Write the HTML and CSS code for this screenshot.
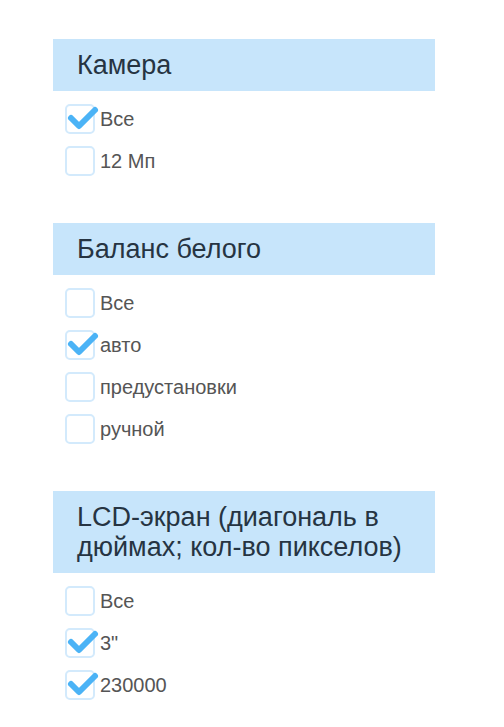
FILE: index.html
```html
<!DOCTYPE html>
<html lang="ru">
<head>
<meta charset="utf-8">
<link rel="stylesheet" href="styles.css">
</head>
<body>
<div class="filters">
  <section class="group">
    <h2 class="group-title">Камера</h2>
    <ul class="options">
      <li class="option"><span class="box checked"><svg viewBox="0 0 30 30"><path d="M5 14 L13 22 L29 6"/></svg></span><span class="label">Все</span></li>
      <li class="option"><span class="box"></span><span class="label">12 Мп</span></li>
    </ul>
  </section>
  <section class="group">
    <h2 class="group-title">Баланс белого</h2>
    <ul class="options">
      <li class="option"><span class="box"></span><span class="label">Все</span></li>
      <li class="option"><span class="box checked"><svg viewBox="0 0 30 30"><path d="M5 14 L13 22 L29 6"/></svg></span><span class="label">авто</span></li>
      <li class="option"><span class="box"></span><span class="label">предустановки</span></li>
      <li class="option"><span class="box"></span><span class="label">ручной</span></li>
    </ul>
  </section>
  <section class="group">
    <h2 class="group-title">LCD-экран (диагональ в дюймах; кол-во пикселов)</h2>
    <ul class="options">
      <li class="option"><span class="box"></span><span class="label">Все</span></li>
      <li class="option"><span class="box checked"><svg viewBox="0 0 30 30"><path d="M5 14 L13 22 L29 6"/></svg></span><span class="label">3"</span></li>
      <li class="option"><span class="box checked"><svg viewBox="0 0 30 30"><path d="M5 14 L13 22 L29 6"/></svg></span><span class="label">230000</span></li>
    </ul>
  </section>
</div>
</body>
</html>
```
FILE: styles.css
```css
html, body {
  margin: 0;
  padding: 0;
  background: #fff;
}
body {
  font-family: "Liberation Sans", Arial, sans-serif;
}
.filters {
  width: 382px;
  margin-left: 53px;
  padding-top: 39px;
  display: flex;
  flex-direction: column;
  gap: 47px;
}
.group-title {
  margin: 0;
  background: #c7e5fb;
  color: #263442;
  font-size: 27px;
  font-weight: normal;
  line-height: 30px;
  padding: 11px 10px 11px 24px;
}
.options {
  list-style: none;
  margin: 0;
  padding: 13px 0 0 12px;
  display: flex;
  flex-direction: column;
  gap: 12px;
}
.option {
  display: flex;
  align-items: center;
  height: 30px;
}
.box {
  position: relative;
  box-sizing: border-box;
  width: 30px;
  height: 30px;
  border: 2px solid #d3eafc;
  border-radius: 5px;
  margin-right: 5px;
  flex: none;
}
.box svg {
  position: absolute;
  left: -1px;
  top: -2px;
  width: 30px;
  height: 30px;
  overflow: visible;
}
.box svg path {
  fill: none;
  stroke: #4bb3f6;
  stroke-width: 6;
  stroke-linecap: round;
  stroke-linejoin: round;
}
.label {
  font-size: 20px;
  color: #555;
}
```
